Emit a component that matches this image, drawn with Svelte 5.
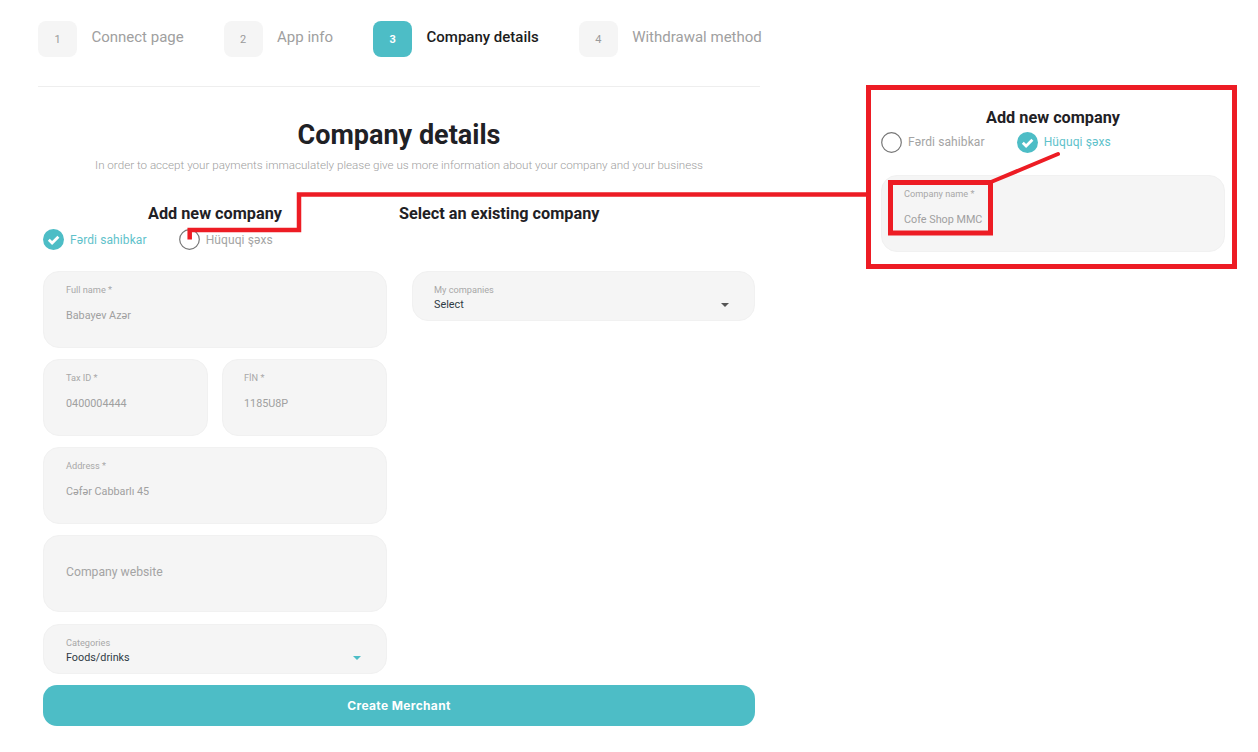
<script lang="ts">
  const steps = [
    { n: 1, label: 'Connect page' },
    { n: 2, label: 'App info' },
    { n: 3, label: 'Company details', active: true },
    { n: 4, label: 'Withdrawal method' }
  ];
</script>

{#snippet radio(label: string, checked: boolean)}
  <div class="radio" class:checked>
    {#if checked}
      <svg width="21" height="21" viewBox="0 0 21 21">
        <circle cx="10.5" cy="10.5" r="10.5" fill="#4dbdc6" />
        <path d="M5.800 10.800l3.300 3.200L15.400 7.800" fill="none" stroke="#fff" stroke-width="2.800" />
      </svg>
    {:else}
      <svg width="21" height="21" viewBox="0 0 21 21">
        <circle cx="10.5" cy="10.5" r="9.800" fill="#fff" stroke="#777" stroke-width="1.200" />
      </svg>
    {/if}
    <span>{label}</span>
  </div>
{/snippet}

{#snippet field(label: string, value: string)}
  <div class="field">
    <span class="field-label">{label}</span>
    <span class="field-value">{value}</span>
  </div>
{/snippet}

{#snippet select(label: string, value: string, teal: boolean)}
  <div class="select" class:teal>
    <span class="field-label">{label}</span>
    <span class="select-value">{value}</span>
    <i class="caret"></i>
  </div>
{/snippet}

<div class="page">
  <main class="wizard">
    <nav class="stepper">
      {#each steps as step}
        <div class="step" class:active={step.active}>
          <div class="step-num">{step.n}</div>
          <div class="step-label">{step.label}</div>
        </div>
      {/each}
    </nav>

    <div class="heading">
      <h1>Company details</h1>
      <p>In order to accept your payments immaculately please give us more information about your company and your business</p>
    </div>

    <div class="form">
      <div class="subheads">
        <h2>Add new company</h2>
        <h2>Select an existing company</h2>
      </div>
      <div class="radios">
        {@render radio('Fərdi sahibkar', true)}
        {@render radio('Hüquqi şəxs', false)}
      </div>

      <div class="columns">
        <div class="col">
          {@render field('Full name *', 'Babayev Azər')}
          <div class="pair">
            {@render field('Tax ID *', '0400004444')}
            {@render field('FİN *', '1185U8P')}
          </div>
          {@render field('Address *', 'Cəfər Cabbarlı 45')}
          <div class="field placeholder"><span>Company website</span></div>
          {@render select('Categories', 'Foods/drinks', true)}
        </div>
        <div class="col right">
          {@render select('My companies', 'Select', false)}
        </div>
      </div>

      <button class="submit">Create Merchant</button>
    </div>
  </main>

  <!-- annotation panel on the right -->
  <aside class="callout">
    <h2>Add new company</h2>
    <div class="radios">
      {@render radio('Fərdi sahibkar', false)}
      {@render radio('Hüquqi şəxs', true)}
    </div>
    {@render field('Company name *', 'Cofe Shop MMC')}
  </aside>

  <svg class="marks" width="1258" height="752" viewBox="0 0 1258 752">
    <path d="M189.700 239.500V230H299V194.500H868" fill="none" stroke="#ed1c24" stroke-width="4.500" />
    <rect x="890.500" y="182.500" width="100" height="50.500" fill="none" stroke="#ed1c24" stroke-width="5" />
    <path d="M991 182L1058 154" fill="none" stroke="#ed1c24" stroke-width="4" stroke-linecap="round" />
  </svg>
</div>

<style>
  :global(body) {
    background: #fff;
    font-family: Roboto, "Liberation Sans", sans-serif;
  }

  .page {
    position: relative;
    width: 1258px;
    height: 752px;
    overflow: hidden;
  }

  .wizard {
    width: 722px;
    padding: 21px 0 0 38px;
  }

  .stepper {
    display: flex;
    gap: 40px;
    height: 65px;
    border-bottom: 1px solid #eee;
    white-space: nowrap;
  }

  .step {
    display: flex;
    gap: 14.400px;
    align-items: flex-start;
  }

  .step-num {
    width: 39px;
    height: 36px;
    display: flex;
    align-items: center;
    justify-content: center;
    border-radius: 8px;
    background: #f5f5f5;
    color: #9a9a9a;
    font-size: 11px;
  }

  .step-label {
    line-height: 32px;
    font-size: 15px;
    color: #a0a0a0;
  }

  .step.active .step-num {
    background: #4dbdc6;
    color: #fff;
    font-weight: 700;
  }

  .step.active .step-label {
    color: #1c1c1c;
    font-weight: 500;
  }

  .heading {
    text-align: center;
    margin-top: 30px;
  }

  h1 {
    margin: 0;
    font-size: 27px;
    line-height: 36px;
    font-weight: 700;
    color: #1f2125;
  }

  .heading p {
    margin: 5px 0 0;
    font-size: 11.640px;
    line-height: 15px;
    font-weight: 300;
    color: #a0a0a0;
  }

  .form {
    width: 712px;
    margin: 31px 0 0 5px;
  }

  .subheads {
    display: flex;
    gap: 117px;
    padding-left: 105px;
  }

  h2 {
    margin: 0;
    font-size: 16.250px;
    line-height: 20px;
    font-weight: 700;
    color: #1f2125;
    white-space: nowrap;
  }

  .radios {
    display: flex;
    gap: 32px;
    margin-top: 5px;
  }

  .radio {
    display: flex;
    align-items: center;
    gap: 6px;
    height: 21px;
    font-size: 12px;
    letter-spacing: 0.1px;
    color: #a4a4a4;
  }

  .radio.checked {
    color: #5fc2cb;
  }

  .columns {
    display: grid;
    grid-template-columns: 344px 343px;
    gap: 25px;
    margin-top: 21px;
  }

  .col {
    display: flex;
    flex-direction: column;
    gap: 11px;
  }

  .pair {
    display: grid;
    grid-template-columns: 165px 165px;
    gap: 14px;
  }

  .pair .field:last-child {
    padding-left: 21px;
  }

  .field, .select {
    position: relative;
    box-sizing: border-box;
    display: flex;
    flex-direction: column;
    background: #f5f5f5;
    border: 1px solid #f1f1f1;
    border-radius: 16px;
    padding: 12px 22px 0;
  }

  .field {
    height: 77px;
  }

  .select {
    height: 50px;
  }

  .select.teal {
    margin-top: 1px;
  }

  .right .select {
    padding-left: 21px;
  }

  .field-label {
    font-size: 9.200px;
    line-height: 12px;
    color: #a8a8a8;
  }

  .field-value {
    margin-top: 13px;
    font-size: 10.800px;
    line-height: 14px;
    color: #a0a0a0;
  }

  .select-value {
    margin-top: 2px;
    font-size: 10.800px;
    line-height: 14px;
    color: #2f3a44;
  }

  .caret {
    position: absolute;
    right: 25px;
    top: 31px;
    border: 4.500px solid transparent;
    border-top: 4.500px solid #555;
    border-bottom: 0;
  }

  .select.teal .caret {
    border-top-color: #4dbdc6;
  }

  .placeholder {
    justify-content: center;
    padding: 0 22px 4px;
    font-size: 12.200px;
    color: #a4a4a4;
  }

  .submit {
    display: block;
    width: 712px;
    height: 41px;
    margin-top: 11px;
    border: 0;
    border-radius: 14px;
    background: #4dbdc6;
    color: #fff;
    font-family: Inter, "Liberation Sans", sans-serif;
    font-size: 12px;
    font-weight: 700;
    letter-spacing: 0.35px;
  }

  .callout {
    position: absolute;
    left: 871px;
    top: 90px;
    width: 361px;
    height: 174px;
    box-sizing: border-box;
    padding: 17.500px 7px 0 10px;
    outline: 5px solid #ed1c24;
  }

  .callout h2 {
    text-align: center;
  }

  .callout .radios {
    margin-top: 4px;
  }

  .callout .field {
    margin-top: 22px;
  }

  .marks {
    position: absolute;
    inset: 0;
    pointer-events: none;
  }
</style>
